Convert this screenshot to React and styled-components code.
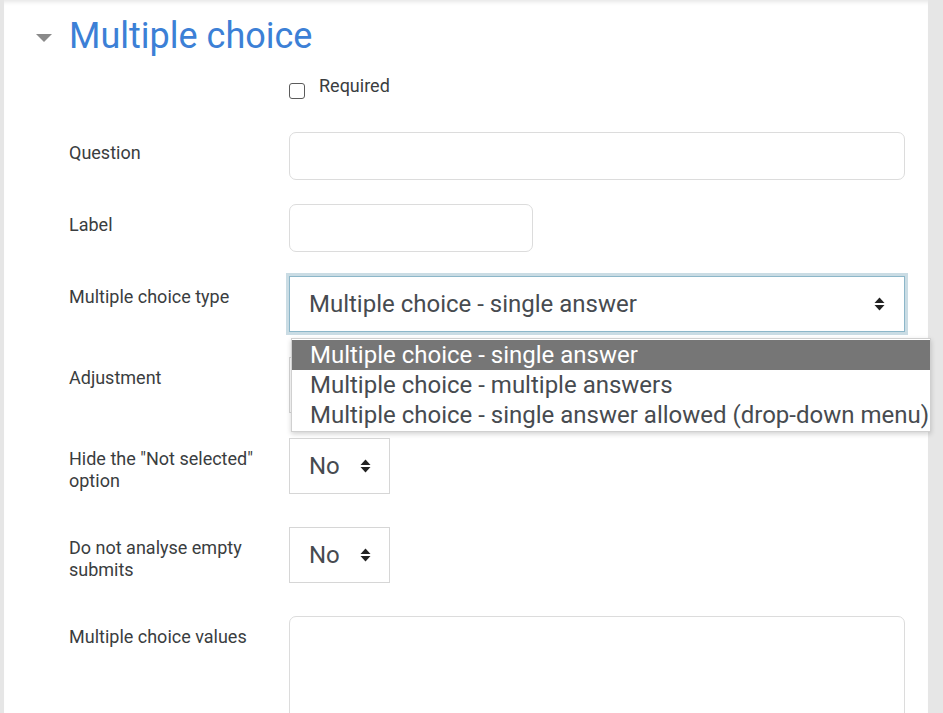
import React from 'react';
import styled, { createGlobalStyle } from 'styled-components';

const GlobalStyle = createGlobalStyle`
  body {
    margin: 0;
    background: #e6e6e6;
    font-family: Roboto, "Liberation Sans", sans-serif;
  }
`;

export const Page = styled.div`
  padding: 0 15px 0 4px;
`;

export const Panel = styled.div`
  background: #fff;
  height: 713px;
  padding: 15px 23px 0 65px;
  box-sizing: border-box;
  box-shadow: inset 0 5px 4px -3px rgba(0, 0, 0, 0.1);
  overflow-x: visible;
  overflow-y: clip;
`;

export const Heading = styled.div`
  display: flex;
  align-items: center;
  gap: 17px;
  margin-left: -33px;
  margin-bottom: 14px;
`;

export const Caret = styled.span`
  width: 0;
  height: 0;
  margin-top: 2px;
  border-left: 8px solid transparent;
  border-right: 8px solid transparent;
  border-top: 8px solid #8a8a8a;
`;

export const Title = styled.h3`
  margin: 0;
  font-size: 36px;
  font-weight: 400;
  line-height: 1.2;
  color: #3c80d6;
`;

export const Row = styled.div`
  display: grid;
  grid-template-columns: 220px 1fr;
  align-items: start;
  margin-bottom: ${p => p.mb ?? 24}px;
`;

export const Label = styled.div`
  font-size: 18px;
  line-height: 1.2;
  color: #3a3d40;
  padding: 10px 24px 12px 0;
`;

export const Control = styled.div`
  position: relative;
`;

export const CheckRow = styled.label`
  display: flex;
  align-items: flex-start;
  gap: 14px;
  font-size: 18px;
  line-height: 27px;
  color: #3a3d40;
`;

export const Box = styled.span`
  width: 16px;
  height: 16px;
  margin-top: 11px;
  border: 1.5px solid #5b5b5b;
  border-radius: 3px;
  box-sizing: border-box;
`;

export const Input = styled.div`
  width: ${p => p.width || '100%'};
  height: ${p => p.height || 48}px;
  border: 1px solid #dcdcdc;
  border-radius: 7px;
  box-sizing: border-box;
  background: #fff;
`;

export const Select = styled.div`
  display: flex;
  align-items: center;
  justify-content: space-between;
  width: ${p => p.width || '100%'};
  height: 56px;
  padding: 0 ${p => p.arrowRight || 19}px 0 19px;
  box-sizing: border-box;
  border: 1px solid ${p => (p.focused ? '#8db7c9' : '#d6d6d6')};
  box-shadow: ${p => (p.focused ? '0 0 0 3px #cadce4' : 'none')};
  font-size: 24px;
  color: #474b50;
  background: #fff;
`;

export const Listbox = styled.div`
  position: absolute;
  top: 62px;
  left: 2px;
  width: 640px;
  padding: 1px 0;
  background: #fff;
  border: 1px solid #d0d0d0;
  box-sizing: border-box;
  box-shadow: 0 2px 5px rgba(0, 0, 0, 0.18);
  z-index: 2;
`;

export const Option = styled.div`
  height: 30px;
  line-height: 30px;
  padding-left: 18px;
  font-size: 24px;
  white-space: nowrap;
  color: ${p => (p.active ? '#fff' : '#474b50')};
  background: ${p => (p.active ? '#767676' : 'transparent')};
`;

const Arrows = () => (
  <svg width="11" height="14" viewBox="0 0 11 14">
    <path d="M0.5 6 L5.5 0.5 L10.5 6 Z" fill="#222" />
    <path d="M0.5 8 L5.5 13.5 L10.5 8 Z" fill="#222" />
  </svg>
);

const typeOptions = [
  'Multiple choice - single answer',
  'Multiple choice - multiple answers',
  'Multiple choice - single answer allowed (drop-down menu)',
];

export default function App() {
  return (
    <Page>
      <GlobalStyle />
      <Panel>
        <Heading>
          <Caret />
          <Title>Multiple choice</Title>
        </Heading>

        <Row mb={33}>
          <div />
          <CheckRow>
            <Box />
            Required
          </CheckRow>
        </Row>

        <Row>
          <Label>Question</Label>
          <Input />
        </Row>

        <Row>
          <Label>Label</Label>
          <Input width="244px" />
        </Row>

        <Row mb={25}>
          <Label>Multiple choice type</Label>
          <Control>
            <Select focused arrowRight={19}>
              <span>Multiple choice - single answer</span>
              <Arrows />
            </Select>
            <Listbox>
              {typeOptions.map((o, i) => (
                <Option key={o} active={i === 0}>{o}</Option>
              ))}
            </Listbox>
          </Control>
        </Row>

        <Row mb={25}>
          <Label>Adjustment</Label>
          <Select width="101px" arrowRight={18}>
            <span>No</span>
            <Arrows />
          </Select>
        </Row>

        <Row>
          <Label>Hide the "Not selected" option</Label>
          <Select width="101px" arrowRight={18}>
            <span>No</span>
            <Arrows />
          </Select>
        </Row>

        <Row mb={23}>
          <Label>Do not analyse empty submits</Label>
          <Select width="101px" arrowRight={18}>
            <span>No</span>
            <Arrows />
          </Select>
        </Row>

        <Row>
          <Label>Multiple choice values</Label>
          <Input height={140} />
        </Row>
      </Panel>
    </Page>
  );
}
